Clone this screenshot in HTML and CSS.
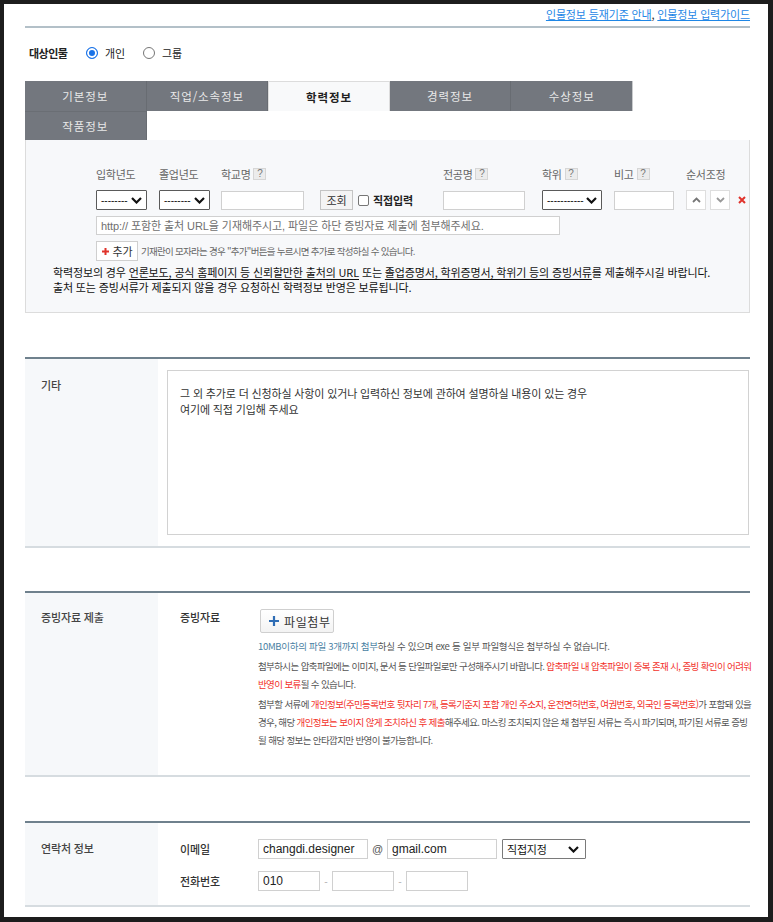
FILE: index.html
```html
<!DOCTYPE html>
<html lang="ko">
<head>
<meta charset="utf-8">
<title>인물정보 입력</title>
<link rel="stylesheet" href="styles.css">
</head>
<body>
<div class="frame">
  <div class="toplinks"><a href="#">인물정보 등재기준 안내</a>, <a href="#">인물정보 입력가이드</a></div>

  <div class="target">
    <span class="target-label">대상인물</span>
    <label class="radio"><span class="rb on"></span>개인</label>
    <label class="radio"><span class="rb"></span>그룹</label>
  </div>

  <div class="tabs">
    <div class="tab">기본정보</div>
    <div class="tab">직업/소속정보</div>
    <div class="tab active">학력정보</div>
    <div class="tab">경력정보</div>
    <div class="tab last">수상정보</div>
    <div class="tab">작품정보</div>
  </div>

  <div class="panel">
    <div class="edu">
      <div class="edu-grid">
        <div class="hd">입학년도</div>
        <div class="hd">졸업년도</div>
        <div class="hd">학교명<span class="q">?</span></div>
        <div class="hd">전공명<span class="q">?</span></div>
        <div class="hd">학위<span class="q">?</span></div>
        <div class="hd">비고<span class="q">?</span></div>
        <div class="hd">순서조정</div>

        <div><div class="sel w51"><span>--------</span><svg width="11" height="7" viewBox="0 0 11 7"><path d="M1 1l4.5 4.5L10 1" fill="none" stroke="#111" stroke-width="2.2"/></svg></div></div>
        <div><div class="sel w51"><span>--------</span><svg width="11" height="7" viewBox="0 0 11 7"><path d="M1 1l4.5 4.5L10 1" fill="none" stroke="#111" stroke-width="2.2"/></svg></div></div>
        <div class="school">
          <input class="inp w83" type="text">
          <button class="btn-search" type="button">조회</button>
          <span class="chk"></span>
          <span class="direct">직접입력</span>
        </div>
        <div><input class="inp w82" type="text"></div>
        <div><div class="sel w60"><span>-----------</span><svg width="11" height="7" viewBox="0 0 11 7"><path d="M1 1l4.5 4.5L10 1" fill="none" stroke="#111" stroke-width="2.2"/></svg></div></div>
        <div><input class="inp w60" type="text"></div>
        <div class="order">
          <span class="obtn"><svg width="9" height="6" viewBox="0 0 9 6"><path d="M1 5l3.5-3.5L8 5" fill="none" stroke="#777" stroke-width="1.8"/></svg></span>
          <span class="obtn"><svg width="9" height="6" viewBox="0 0 9 6"><path d="M1 1l3.5 3.5L8 1" fill="none" stroke="#999" stroke-width="1.8"/></svg></span>
          <svg class="del" width="8" height="8" viewBox="0 0 8 8"><path d="M1 1l6 6M7 1l-6 6" stroke="#e0332b" stroke-width="2"/></svg>
        </div>
      </div>

      <input class="url" type="text" placeholder="http:// 포함한 출처 URL을 기재해주시고, 파일은 하단 증빙자료 제출에 첨부해주세요.">

      <div class="addrow">
        <button class="btn-add" type="button"><svg width="7" height="7" viewBox="0 0 7 7"><path d="M3.5 0v7M0 3.5h7" stroke="#e0332b" stroke-width="2"/></svg>추가</button>
        <span class="addnote">기재란이 모자라는 경우 "추가"버튼을 누르시면 추가로 작성하실 수 있습니다.</span>
      </div>
    </div>

    <p class="notice">학력정보의 경우 <u>언론보도, 공식 홈페이지 등 신뢰할만한 출처의 URL</u> 또는 <u>졸업증명서, 학위증명서, 학위기 등의 증빙서류</u>를 제출해주시길 바랍니다.<br>출처 또는 증빙서류가 제출되지 않을 경우 요청하신 학력정보 반영은 보류됩니다.</p>
  </div>

  <section class="sec sec-etc">
    <div class="sec-label">기타</div>
    <div class="sec-body">
      <textarea class="memo">그 외 추가로 더 신청하실 사항이 있거나 입력하신 정보에 관하여 설명하실 내용이 있는 경우
여기에 직접 기입해 주세요</textarea>
    </div>
  </section>

  <section class="sec sec-file">
    <div class="sec-label">증빙자료 제출</div>
    <div class="sec-body sub">
      <div class="sub-label">증빙자료</div>
      <div class="sub-content">
        <button class="btn-file" type="button"><svg width="10" height="10" viewBox="0 0 10 10"><path d="M5 0v10M0 5h10" stroke="#2f6db5" stroke-width="2.2"/></svg>파일첨부</button>
        <p class="fp fp-first"><span class="blue">10MB이하의 파일 3개까지 첨부</span>하실 수 있으며 exe 등 일부 파일형식은 첨부하실 수 없습니다.</p>
        <p class="fp">첨부하시는 압축파일에는 이미지, 문서 등 단일파일로만 구성해주시기 바랍니다. <span class="red">압축파일 내 압축파일이 중복 존재 시, 증빙 확인이 어려워</span><br><span class="red">반영이 보류</span>될 수 있습니다.</p>
        <p class="fp">첨부할 서류에 <span class="red">개인정보(주민등록번호 뒷자리 7개, 등록기준지 포함 개인 주소지, 운전면허번호, 여권번호, 외국인 등록번호)</span>가 포함돼 있을<br>경우, 해당 <span class="red">개인정보는 보이지 않게 조치하신 후 제출</span>해주세요. 마스킹 조치되지 않은 채 첨부된 서류는 즉시 파기되며, 파기된 서류로 증빙<br>될 해당 정보는 안타깝지만 반영이 불가능합니다.</p>
      </div>
    </div>
  </section>

  <section class="sec sec-contact">
    <div class="sec-label">연락처 정보</div>
    <div class="sec-body sub contact">
      <div class="sub-label">이메일</div>
      <div class="crow">
        <input class="cin w110" type="text" value="changdi.designer">
        <span class="at">@</span>
        <input class="cin w110" type="text" value="gmail.com">
        <div class="sel csel"><span>직접지정</span><svg width="11" height="7" viewBox="0 0 11 7"><path d="M1 1l4.5 4.5L10 1" fill="none" stroke="#111" stroke-width="2.2"/></svg></div>
      </div>
      <div class="sub-label">전화번호</div>
      <div class="crow">
        <input class="cin w62" type="text" value="010">
        <span class="dash">-</span>
        <input class="cin w62" type="text">
        <span class="dash">-</span>
        <input class="cin w62" type="text">
      </div>
    </div>
  </section>
</div>
</body>
</html>
```

FILE: styles.css
```css
* { box-sizing: border-box; }
html, body { margin: 0; padding: 0; }
body {
  background: #1d1d1d;
  font-family: "Noto Sans CJK KR", "Noto Sans", sans-serif;
  color: #333;
  font-size: 11px;
  letter-spacing: -0.15px;
}
.frame {
  margin: 4px 5px 0 4px;
  height: 913px;
  background: #fff;
  overflow: hidden;
  padding: 0 18px 0 21px;
}

/* top links */
.toplinks {
  height: 24px;
  padding-top: 2px;
  line-height: 16px;
  text-align: right;
  font-size: 11px;
  letter-spacing: -0.15px;
  color: #333;
  border-bottom: 2px solid #b3c0c8;
}
.toplinks a { color: #1f87e6; text-decoration: underline; }

/* target */
.target {
  display: flex;
  align-items: center;
  height: 16px;
  margin: 17px 0 20px;
  padding-left: 4px;
  line-height: 16px;
}
.target-label { width: 57px; font-weight: 700; color: #222; letter-spacing: -0.5px; }
.radio { display: flex; align-items: center; color: #222; margin-right: 18px; }
.rb {
  width: 12px; height: 12px; border-radius: 50%;
  border: 1px solid #767676; background: #fff;
  margin-right: 7px;
}
.rb.on { border: 1px solid #1a73e8; box-shadow: inset 0 0 0 2px #fff; background: #1a73e8; }

/* tabs */
.tabs {
  display: grid;
  grid-template-columns: repeat(5, 121.6px);
  grid-template-rows: 30px 29px;
}
.tab {
  display: flex; align-items: center; justify-content: center;
  background: #73777e;
  color: #e9e9e9;
  font-size: 11.5px;
  letter-spacing: 0.9px;
  border-right: 1px solid #686c72;
}
.tab.last { border-right: 1px solid #c9cbcd; }
.tab.active {
  background: #f8f9fa;
  color: #222;
  font-weight: 700;
  border: 1px solid #dcdcdc;
  border-bottom: none;
}
.tabs .tab:nth-child(6) { border-top: 1px solid #6a6e74; }

/* panel */
.panel {
  height: 173px;
  border: 1px solid #dcdcdc;
  border-top: none;
  background: #f7f8fa;
  padding-top: 27px;
}
.edu { padding-left: 70px; }
.edu-grid {
  display: grid;
  grid-template-columns: 63px 62px 222px 99px 72px 72px auto;
  row-gap: 9px;
  align-items: center;
}
.hd {
  display: flex; align-items: center;
  line-height: 14px;
  color: #666;
  font-size: 11px;
  letter-spacing: -0.3px;
}
.q {
  display: inline-block;
  width: 13px; height: 12px;
  margin-left: 3px;
  border: 1px solid #d6d6d6;
  background: #ececec;
  color: #777;
  font-family: "Liberation Sans", sans-serif;
  font-size: 10px;
  line-height: 10px;
  text-align: center;
  letter-spacing: 0;
}
.sel {
  display: flex; align-items: center; justify-content: space-between;
  height: 20px;
  border: 1px solid #5a5a5a;
  border-radius: 1px;
  background: #fff;
  padding: 0 4px 0 4px;
  font-family: "Liberation Sans", sans-serif;
  font-size: 10px;
  letter-spacing: 0;
  color: #111;
}
.w51 { width: 51px; }
.w60 { width: 60px; }
.w82 { width: 82px; }
.w83 { width: 83px; }
.inp {
  display: block;
  height: 19px;
  border: 1px solid #d0d0d0;
  background: #fff;
  margin: 0;
  padding: 0 4px;
}
.school { display: flex; align-items: center; }
.btn-search {
  margin: 0 0 0 16px;
  width: 33px; height: 20px;
  padding: 0;
  border: 1px solid #c4c4c4;
  background: #f4f4f4;
  font-family: "Noto Sans CJK KR", sans-serif;
  font-size: 11px;
  letter-spacing: -0.2px;
  color: #333;
}
.chk {
  width: 11px; height: 11px;
  margin-left: 5px;
  border: 1px solid #767676;
  border-radius: 2px;
  background: #fff;
}
.direct { margin-left: 4px; font-weight: 700; color: #222; }
.order { display: flex; align-items: center; }
.obtn {
  display: flex; align-items: center; justify-content: center;
  width: 20px; height: 20px;
  margin-right: 4px;
  border: 1px solid #dedede;
  background: #fff;
}
.del { margin-left: 4px; }

.url {
  display: block;
  margin: 6px 0 0;
  width: 464px; height: 19px;
  padding: 0 4px;
  border: 1px solid #d0d0d0;
  background: #fff;
  font-family: "Liberation Sans", "Noto Sans CJK KR", sans-serif;
  font-size: 11px;
  letter-spacing: -0.08px;
}
.url::placeholder { color: #6f6f6f; }

.addrow { display: flex; align-items: center; margin-top: 6px; height: 20px; }
.btn-add {
  display: flex; align-items: center; justify-content: center; gap: 4px;
  width: 42px; height: 20px;
  padding: 0;
  margin: 0;
  border: 1px solid #cfcfcf;
  background: #fff;
  font-family: "Noto Sans CJK KR", sans-serif;
  font-size: 11px;
  letter-spacing: -0.2px;
  color: #333;
}
.addnote {
  margin-left: 3px;
  font-size: 9.5px;
  letter-spacing: -0.72px;
  color: #666;
}
.notice {
  margin: 4px 0 0;
  padding-left: 27px;
  line-height: 15px;
  color: #111;
  font-size: 11px;
  letter-spacing: -0.15px;
}
.notice u { text-underline-offset: 2px; }

/* sections */
.sec {
  display: grid;
  grid-template-columns: 133px 1fr;
  border-top: 2px solid #6f818d;
  border-bottom: 2px solid #d6dce0;
}
.sec-label {
  background: #f6f8fa;
  padding-left: 16px;
  line-height: 16px;
  color: #444;
  font-weight: 500;
}
.sec-etc { margin-top: 44px; height: 191px; }
.sec-etc .sec-label { padding-top: 18px; }
.sec-etc .sec-body { padding: 11px 1px 11px 9px; }
.memo {
  display: block;
  width: 100%;
  height: 165px;
  margin: 0;
  padding: 14px 12px;
  border: 1px solid #d2d2d2;
  resize: none;
  font-family: "Noto Sans CJK KR", sans-serif;
  font-size: 11px;
  letter-spacing: -0.15px;
  line-height: 16px;
  color: #333;
  overflow: hidden;
}

.sub {
  display: grid;
  grid-template-columns: 78px 1fr;
  padding-left: 22px;
  align-content: start;
}
.sub-label { line-height: 16px; color: #333; font-weight: 500; }

.sec-file { margin-top: 43px; height: 186px; }
.sec-file .sec-label { padding-top: 16px; }
.sec-file .sec-body { padding-top: 16px; }
.sub-content { margin-top: 0; }
.btn-file {
  display: flex; align-items: center; gap: 5px;
  margin: 0 0 0 2px;
  height: 24px; width: 74px;
  padding: 0 0 0 8px;
  border: 1px solid #cfcfcf;
  border-radius: 2px;
  background: linear-gradient(#fff, #f3f3f3);
  font-family: "Noto Sans CJK KR", sans-serif;
  font-size: 12px;
  letter-spacing: 0.6px;
  color: #333;
}
.fp {
  margin: 2px 0 0;
  line-height: 18px;
  font-size: 9.5px;
  letter-spacing: -0.62px;
  color: #555;
  white-space: nowrap;
}
.fp.fp-first { margin-top: 4px; letter-spacing: -0.3px; }
.blue { color: #4a7fa3; }
.red { color: #f2322b; }

.sec-contact { margin-top: 44px; height: 86px; }
.sec-contact .sec-label { padding-top: 17px; }
.contact { padding-top: 16px; row-gap: 12px; align-items: center; }
.crow { display: flex; align-items: center; height: 20px; }
.cin {
  display: block;
  height: 20px;
  margin: 0;
  padding: 0 4px;
  border: 1px solid #d0d0d0;
  background: #fff;
  font-family: "Liberation Sans", sans-serif;
  font-size: 12px;
  letter-spacing: 0;
  color: #222;
}
.w110 { width: 110px; }
.w62 { width: 62px; }
.at { width: 19px; text-align: center; font-family: "Liberation Sans", sans-serif; font-size: 11px; color: #555; letter-spacing: 0; }
.dash { width: 12px; text-align: center; color: #aaa; font-size: 10px; }
.csel {
  margin-left: 5px;
  width: 84px;
  height: 20px;
  border-color: #7a7a7a;
  padding: 0 6px 0 4px;
  font-family: "Noto Sans CJK KR", sans-serif;
  font-size: 11px;
  letter-spacing: -0.2px;
}
```
